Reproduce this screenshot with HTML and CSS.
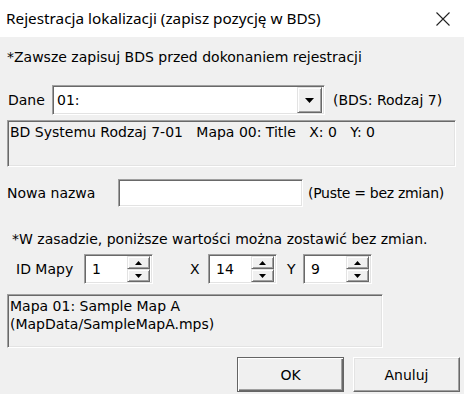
FILE: index.html
```html
<!DOCTYPE html>
<html lang="pl">
<head>
<meta charset="utf-8">
<title>Rejestracja lokalizacji</title>
<link rel="stylesheet" href="styles.css">
</head>
<body>
<div class="dialog">
  <div class="titlebar">
    <span class="title">Rejestracja lokalizacji (zapisz pozycję w BDS)</span>
    <svg class="close" width="14" height="14" viewBox="0 0 14 14"><path d="M0.5 0.5L13.5 13.5M13.5 0.5L0.5 13.5" stroke="#222" stroke-width="1.1" fill="none"/></svg>
  </div>
  <div class="content">
    <div class="note1">*Zawsze zapisuj BDS przed dokonaniem rejestracji</div>
    <div class="row combo-row">
      <span class="lbl-dane">Dane</span>
      <div class="combo sunken">
        <span class="combo-text">01:</span>
        <div class="combo-btn raised"><svg width="9" height="5" viewBox="0 0 9 5"><path d="M0 0H9L4.5 5Z" fill="#000"/></svg></div>
      </div>
      <span class="combo-hint">(BDS: Rodzaj 7)</span>
    </div>
    <div class="info info1">BD Systemu Rodzaj 7-01&nbsp;&nbsp; Mapa 00: Title&nbsp;&nbsp; X: 0&nbsp;&nbsp; Y: 0</div>
    <div class="row name-row">
      <span class="lbl-name">Nowa nazwa</span>
      <div class="edit sunken"></div>
      <span class="name-hint">(Puste = bez zmian)</span>
    </div>
    <div class="note2">*W zasadzie, poniższe wartości można zostawić bez zmian.</div>
    <div class="row spin-row">
      <span class="lbl-id">ID Mapy</span>
      <div class="spin sunken"><span class="spin-val">1</span><div class="spin-btns"><div class="sb raised"><svg width="7" height="4" viewBox="0 0 7 4"><path d="M0 4H7L3.5 0Z"/></svg></div><div class="sb raised"><svg width="7" height="4" viewBox="0 0 7 4"><path d="M0 0H7L3.5 4Z"/></svg></div></div></div>
      <span class="lbl-x">X</span>
      <div class="spin sunken"><span class="spin-val">14</span><div class="spin-btns"><div class="sb raised"><svg width="7" height="4" viewBox="0 0 7 4"><path d="M0 4H7L3.5 0Z"/></svg></div><div class="sb raised"><svg width="7" height="4" viewBox="0 0 7 4"><path d="M0 0H7L3.5 4Z"/></svg></div></div></div>
      <span class="lbl-y">Y</span>
      <div class="spin sunken"><span class="spin-val">9</span><div class="spin-btns"><div class="sb raised"><svg width="7" height="4" viewBox="0 0 7 4"><path d="M0 4H7L3.5 0Z"/></svg></div><div class="sb raised"><svg width="7" height="4" viewBox="0 0 7 4"><path d="M0 0H7L3.5 4Z"/></svg></div></div></div>
    </div>
    <div class="info info2">Mapa 01: Sample Map A<br>(MapData/SampleMapA.mps)</div>
    <div class="buttons">
      <div class="btn btn-default">OK</div>
      <div class="btn">Anuluj</div>
    </div>
  </div>
</div>
</body>
</html>
```

FILE: styles.css
```css
html, body {
  margin: 0;
  padding: 0;
  width: 464px;
  height: 394px;
  overflow: hidden;
  background: #f0f0f0;
}
.dialog {
  width: 464px;
  height: 394px;
  font-family: "DejaVu Sans", sans-serif;
  font-size: 14px;
  color: #000;
  display: flex;
  flex-direction: column;
}
.titlebar {
  height: 37px;
  background: #fff;
  display: flex;
  align-items: center;
  justify-content: space-between;
  padding: 0 14px 0 6px;
  box-sizing: border-box;
}
.title {
  font-family: "Noto Sans", sans-serif;
  font-size: 15.3px;
  color: #000;
  margin-top: -2px;
}
.content {
  flex: 1;
  display: flex;
  flex-direction: column;
}
.note1 {
  height: 24px;
  line-height: 24px;
  margin-top: 8px;
  padding-left: 7px;
}
.row {
  display: flex;
  align-items: center;
}
.sunken {
  box-sizing: border-box;
  border-style: solid;
  border-width: 1px;
  border-color: #a0a0a0 #fff #fff #a0a0a0;
  box-shadow: inset 1px 1px 0 #696969, inset -1px -1px 0 #e3e3e3;
  background: #fff;
}
.raised {
  box-sizing: border-box;
  border-style: solid;
  border-width: 1px;
  border-color: #e3e3e3 #696969 #696969 #e3e3e3;
  box-shadow: inset 1px 1px 0 #fff, inset -1px -1px 0 #a0a0a0;
  background: #f0f0f0;
}
.combo-row {
  height: 30px;
  margin-top: 16px;
}
.lbl-dane { width: 44px; padding-left: 8px; }
.combo {
  width: 273px;
  height: 30px;
  display: flex;
  align-items: center;
  padding: 2px;
}
.combo-text {
  flex: 1;
  padding-left: 2px;
}
.combo-btn {
  width: 25px;
  height: 26px;
  display: flex;
  align-items: center;
  justify-content: center;
}
.combo-hint { margin-left: 8px; }
.info {
  box-sizing: border-box;
  border-style: solid;
  border-width: 1px;
  border-color: #a0a0a0 #fff #fff #a0a0a0;
  box-shadow: inset 1px 1px 0 #696969, inset -1px -1px 0 #e3e3e3;
  background: #f0f0f0;
  margin-left: 7px;
  padding: 2px 0 0 2px;
  line-height: 18px;
}
.info1 {
  width: 449px;
  height: 47px;
  margin-top: 5px;
}
.name-row {
  height: 28px;
  margin-top: 12px;
}
.lbl-name { width: 111px; padding-left: 7px; }
.edit { width: 185px; height: 28px; }
.name-hint { margin-left: 5px; letter-spacing: -0.3px; }
.note2 {
  margin-top: 22px;
  padding-left: 12px;
  height: 20px;
  line-height: 20px;
}
.spin-row {
  height: 30px;
  margin-top: 5px;
}
.spin {
  width: 69px;
  height: 30px;
  display: flex;
  align-items: center;
  padding: 2px;
}
.spin-val { flex: 1; padding-left: 5px; }
.spin-btns {
  display: flex;
  flex-direction: column;
  width: 23px;
  height: 26px;
}
.sb {
  flex: 1;
  display: flex;
  align-items: center;
  justify-content: center;
}
.lbl-id { width: 68px; padding-left: 16px; }
.lbl-x { width: 18px; margin-left: 37px; }
.lbl-y { width: 16px; margin-left: 10px; }
.info2 {
  width: 376px;
  height: 54px;
  margin-top: 10px;
}
.buttons {
  display: flex;
  justify-content: flex-end;
  gap: 9px;
  padding-right: 4px;
  margin-top: 9px;
}
.btn {
  box-sizing: border-box;
  width: 107px;
  height: 35px;
  display: flex;
  align-items: center;
  justify-content: center;
  border-style: solid;
  border-width: 1px;
  border-color: #fff #696969 #696969 #fff;
  box-shadow: inset -1px -1px 0 #a0a0a0, inset 1px 1px 0 #e3e3e3;
  background: #f0f0f0;
}
.btn-default {
  border: 1px solid #646464;
  box-shadow: inset 1px 1px 0 #fff, inset -1px -1px 0 #696969, inset -2px -2px 0 #a0a0a0;
}
```
